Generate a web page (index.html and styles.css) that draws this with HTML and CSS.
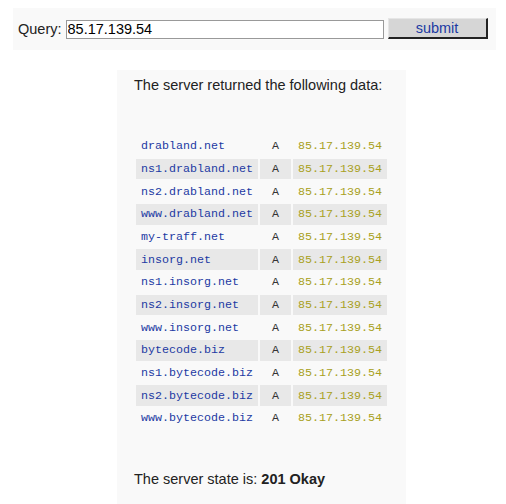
FILE: index.html
```html
<!DOCTYPE html>
<html>
<head>
<meta charset="utf-8">
<link rel="stylesheet" href="styles.css">
</head>
<body>
<form class="query-bar">
  <label class="query-label" for="q">Query:</label>
  <input class="query-input" id="q" type="text" value="85.17.139.54">
  <button class="query-submit" type="button">submit</button>
</form>
<div class="result">
  <p class="result-intro">The server returned the following data:</p>
  <table class="records">
    <tr><td class="name">drabland.net</td><td class="type">A</td><td class="ip">85.17.139.54</td></tr>
    <tr class="alt"><td class="name">ns1.drabland.net</td><td class="type">A</td><td class="ip">85.17.139.54</td></tr>
    <tr><td class="name">ns2.drabland.net</td><td class="type">A</td><td class="ip">85.17.139.54</td></tr>
    <tr class="alt"><td class="name">www.drabland.net</td><td class="type">A</td><td class="ip">85.17.139.54</td></tr>
    <tr><td class="name">my-traff.net</td><td class="type">A</td><td class="ip">85.17.139.54</td></tr>
    <tr class="alt"><td class="name">insorg.net</td><td class="type">A</td><td class="ip">85.17.139.54</td></tr>
    <tr><td class="name">ns1.insorg.net</td><td class="type">A</td><td class="ip">85.17.139.54</td></tr>
    <tr class="alt"><td class="name">ns2.insorg.net</td><td class="type">A</td><td class="ip">85.17.139.54</td></tr>
    <tr><td class="name">www.insorg.net</td><td class="type">A</td><td class="ip">85.17.139.54</td></tr>
    <tr class="alt"><td class="name">bytecode.biz</td><td class="type">A</td><td class="ip">85.17.139.54</td></tr>
    <tr><td class="name">ns1.bytecode.biz</td><td class="type">A</td><td class="ip">85.17.139.54</td></tr>
    <tr class="alt"><td class="name">ns2.bytecode.biz</td><td class="type">A</td><td class="ip">85.17.139.54</td></tr>
    <tr><td class="name">www.bytecode.biz</td><td class="type">A</td><td class="ip">85.17.139.54</td></tr>
  </table>
  <p class="result-state">The server state is: <b>201 Okay</b></p>
</div>
</body>
</html>
```
FILE: styles.css
```css
html, body {
  margin: 0;
  padding: 0;
  background: #ffffff;
  font-family: "Liberation Sans", Arial, sans-serif;
  color: #222222;
}

.query-bar {
  display: flex;
  align-items: center;
  box-sizing: border-box;
  margin: 8px 0 0 13px;
  width: 483px;
  height: 42px;
  padding-left: 5px;
  background: #f9f9f9;
}

.query-label {
  font-size: 14.5px;
  color: #222222;
  margin-right: 4px;
}

.query-input {
  box-sizing: border-box;
  width: 318px;
  height: 19px;
  margin: 0;
  padding: 0 1px;
  border: 1px solid #999999;
  background: #ffffff;
  font-family: "Liberation Sans", Arial, sans-serif;
  font-size: 14.5px;
  color: #000000;
  outline: none;
}

.query-submit {
  box-sizing: border-box;
  width: 100px;
  height: 21px;
  margin: -1px 0 0 4px;
  padding: 0;
  background: #d6d6d6;
  border-style: solid;
  border-width: 1px 2px 2px 1px;
  border-color: #e6e6e6 #222222 #222222 #e6e6e6;
  font-family: "Liberation Sans", Arial, sans-serif;
  font-size: 14.5px;
  line-height: 17px;
  color: #1c3aa3;
}

.result {
  box-sizing: border-box;
  margin: 20px 0 0 117px;
  width: 289px;
  padding: 7px 17px 20px 17px;
  background: #f9f9f9;
}

.result-intro {
  margin: 0 0 40px 0;
  font-size: 14.5px;
  line-height: 17px;
  color: #222222;
}

.records {
  border-collapse: separate;
  border-spacing: 2px;
  font-family: "Liberation Mono", "Courier New", monospace;
  font-size: 11.67px;
}

.records td {
  height: 20.67px;
  box-sizing: border-box;
  padding: 1px 5px 0 5px;
  line-height: 12.67px;
  white-space: nowrap;
}

.records .alt td {
  background: #e8e8e8;
}

.records .name {
  width: 122px;
  color: #1c3aa3;
}

.records .type {
  width: 31px;
  text-align: center;
  padding-left: 0;
  padding-right: 0;
  color: #333333;
}

.records .ip {
  width: 94px;
  color: #a8a020;
}

.result-state {
  margin: 40px 0 0 0;
  font-size: 14.5px;
  line-height: 17px;
  color: #222222;
}

.result-state b {
  color: #222222;
}
```
